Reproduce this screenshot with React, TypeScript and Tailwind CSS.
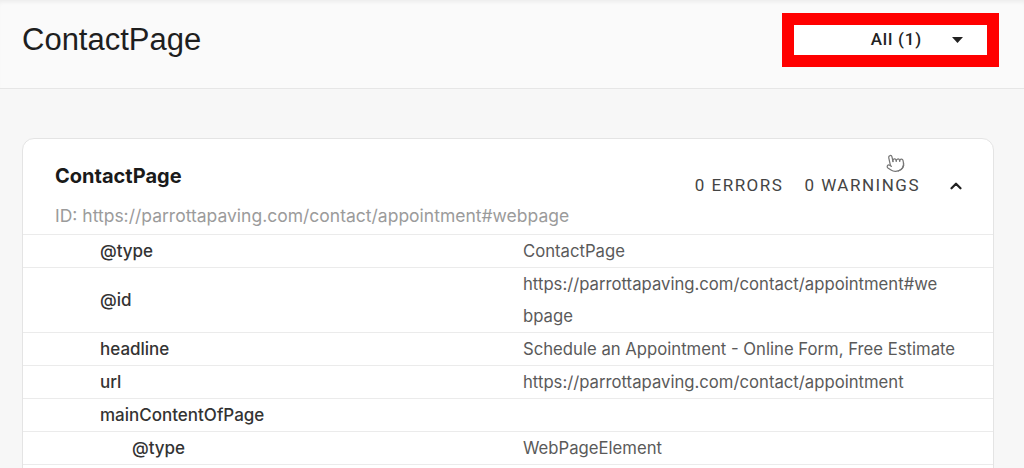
import { ChevronUp, Pointer } from "lucide-react"

const rows = [
  { key: "@type", value: "ContactPage" },
  { key: "@id", value: "https://parrottapaving.com/contact/appointment#webpage" },
  { key: "headline", value: "Schedule an Appointment - Online Form, Free Estimate" },
  { key: "url", value: "https://parrottapaving.com/contact/appointment" },
  { key: "mainContentOfPage", value: "" },
  { key: "@type", value: "WebPageElement", nested: true },
]

export default function App() {
  return (
    <div className="h-[468px] w-[1024px] overflow-hidden bg-[#f7f7f7] font-['Inter',sans-serif]">
      <header className="flex h-[89px] items-center justify-between border-b border-[#e6e6e6] bg-[#fafafa] pl-[22px] pr-[25px] shadow-[inset_0_4px_4px_-2px_rgba(0,0,0,0.06)]">
        <h1 className="mt-[-8px] font-['Liberation_Sans',sans-serif] text-[31px] text-[#1e1e1e]">ContactPage</h1>
        <div className="mt-[-8px] border-[12px] border-[#ff0000]">
          <div className="flex h-[30px] w-[193px] items-center justify-end gap-[30px] bg-white pr-[24px] font-['Roboto',sans-serif] text-[17px] font-medium tracking-[0.8px] text-[#222]">
            <span>All (1)</span>
            <svg width="11" height="6" viewBox="0 0 11 6">
              <path d="M0 0h11L5.5 6z" fill="#222" />
            </svg>
          </div>
        </div>
      </header>

      <main className="pl-[22px] pr-[30px] pt-[49px]">
        <div className="relative rounded-[12px] border border-[#e4e4e4] bg-white pb-[40px]">
          <div className="flex justify-between pl-[32px] pr-[28px] pt-[22px]">
            <h2 className="text-[20px] font-bold text-[#1a1a1a]">ContactPage</h2>
            <div className="mt-[12px] flex items-center font-['Roboto',sans-serif] text-[17px] tracking-[1.5px] text-[#444]">
              <span>0 ERRORS</span>
              <span className="ml-[21px]">0 WARNINGS</span>
              <ChevronUp className="ml-[27px]" size={18} strokeWidth={3} color="#222" />
            </div>
          </div>
          <div className="pl-[32px] pb-[5px] pt-[4px] text-[17.5px] text-[#9b9b9b]">
            ID: https://parrottapaving.com/contact/appointment#webpage
          </div>

          <div>
            {rows.map((row, i) => (
              <div key={i} className="flex border-t border-[#ebebeb] leading-[32px]">
                <div className={`w-[500px] shrink-0 text-[17px] font-medium text-[#333] ${row.nested ? "pl-[109px]" : "pl-[77px]"} ${row.key === "@id" ? "self-center" : ""}`}>
                  {row.key}
                </div>
                <div className={`break-all text-[16.7px] text-[#5a5a5a] ${row.key === "@id" ? "w-[420px]" : "w-[440px]"}`}>
                  {row.value || "\u00a0"}
                </div>
              </div>
            ))}
            <div className="border-t border-[#ebebeb]" />
          </div>

          <Pointer className="absolute left-[862px] top-[14px] -rotate-12" size={20} strokeWidth={1.5} color="#777" />
        </div>
      </main>
    </div>
  )
}
